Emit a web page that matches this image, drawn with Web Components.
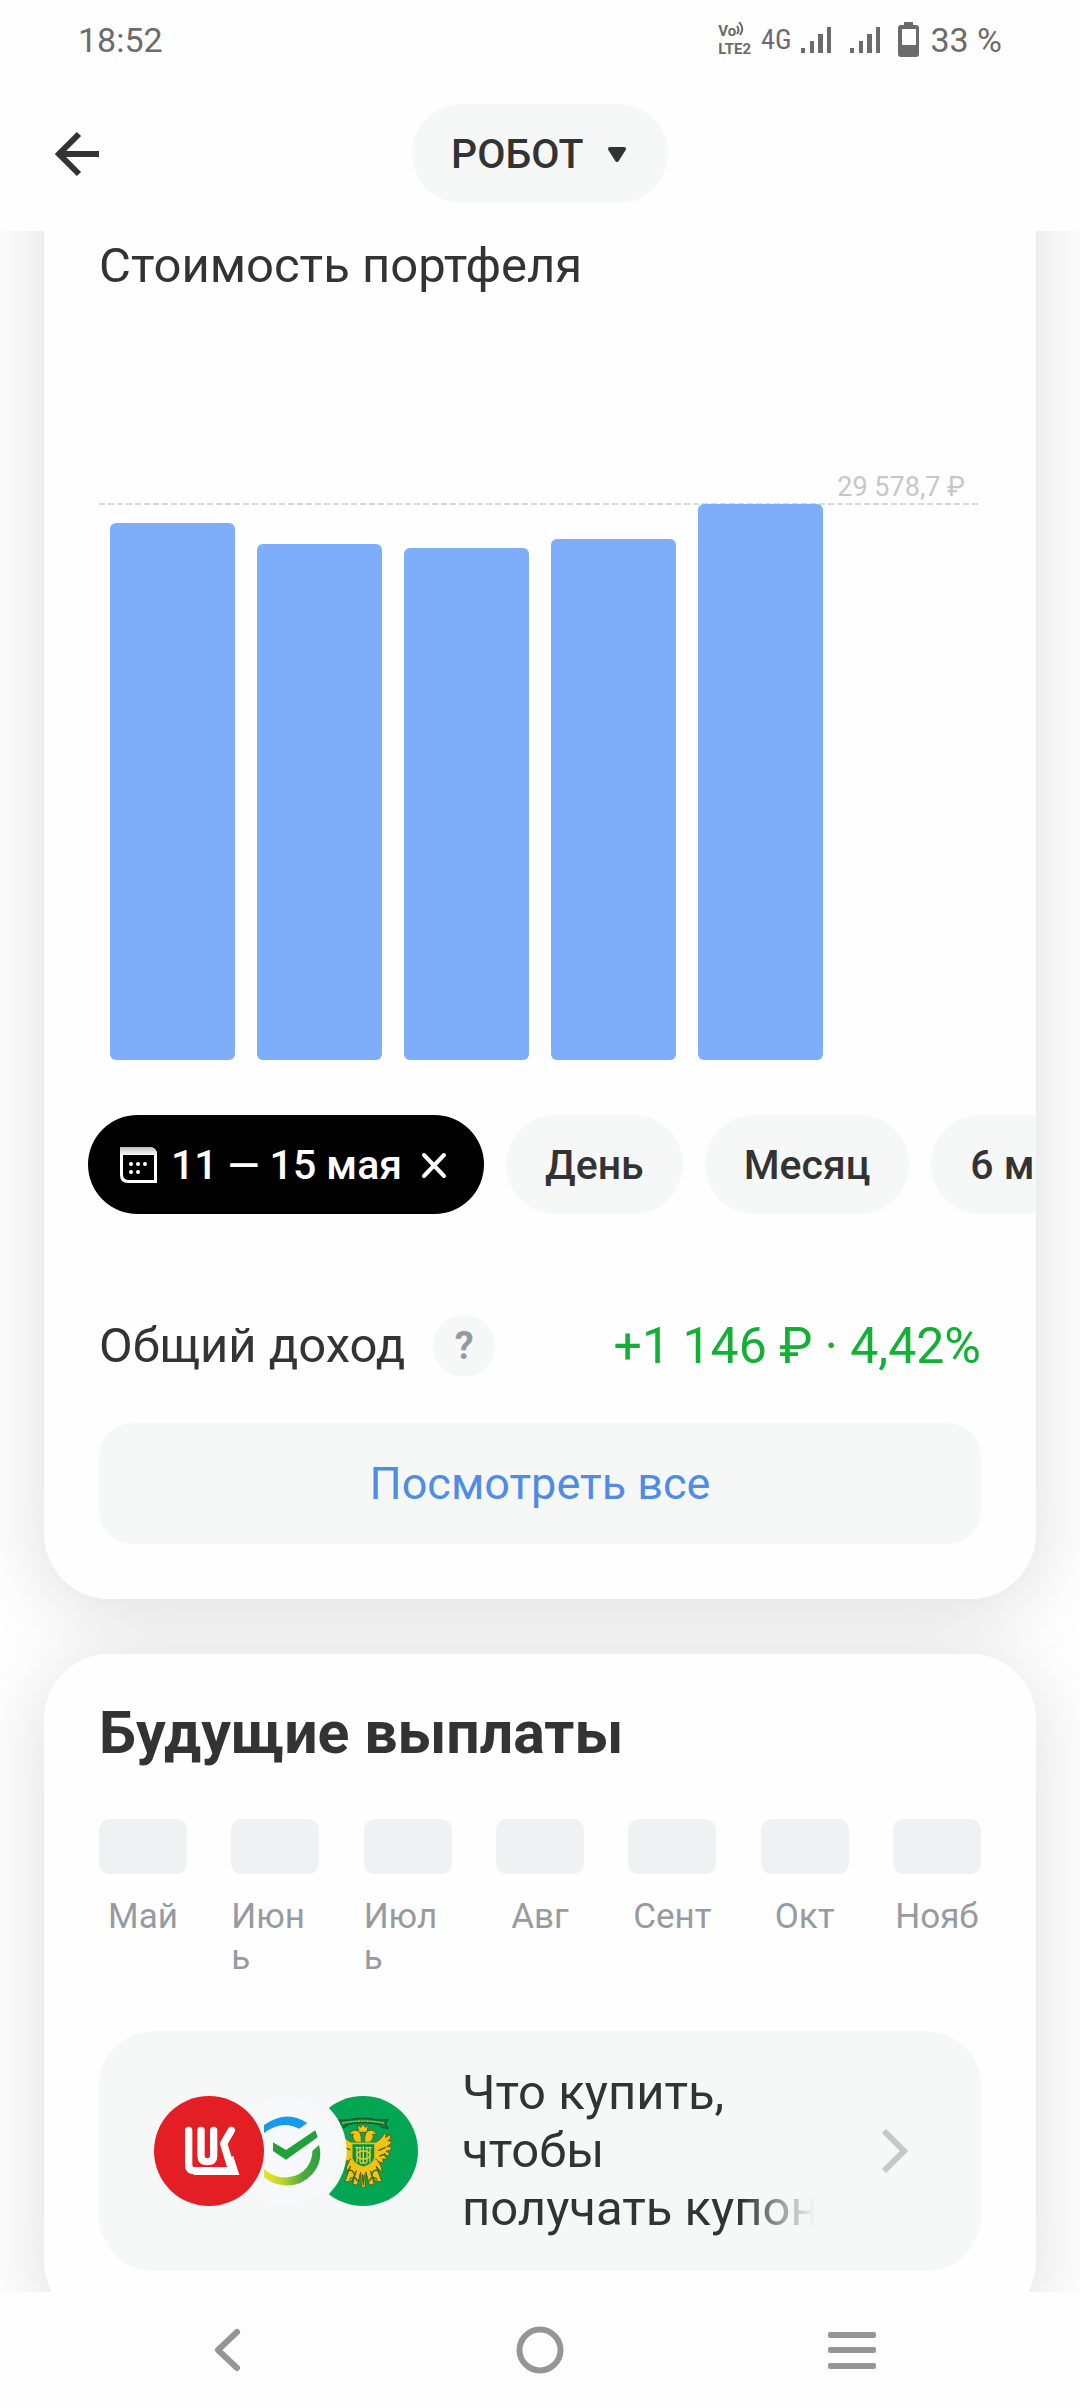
<!DOCTYPE html>
<html lang="ru">
<head>
<meta charset="utf-8">
<meta name="viewport" content="width=device-width, initial-scale=1">
<title>Портфель</title>
<style>
  html, body { margin: 0; height: 100%; }
  body {
    --ink: #333333;
    --muted: #989aa2;
    --soft: #f6f8f7;
    --bar: #7eadf9;
    --link: #4f8ce6;
    --gain: #13b036;
    background: #fefefe;
    color: var(--ink);
    font-family: Roboto, "Noto Sans", sans-serif;
  }
</style>
</head>
<body>
<portfolio-app>
  <status-bar slot="status" time="18:52" charge="33 %"></status-bar>
  <top-bar slot="top" account="РОБОТ"></top-bar>

  <surface-card continued>
    <card-title>Стоимость портфеля</card-title>
    <bar-chart label="29 578,7 ₽" values="537 516 512 521 556" slots="6" max="556"></bar-chart>
    <chip-row>
      <filter-chip active>11 — 15 мая</filter-chip>
      <filter-chip>День</filter-chip>
      <filter-chip>Месяц</filter-chip>
      <filter-chip>6 месяцев</filter-chip>
    </chip-row>
    <income-row amount="+1 146 ₽ · 4,42%">Общий доход</income-row>
    <wide-button>Посмотреть все</wide-button>
  </surface-card>

  <surface-card>
    <card-title strong>Будущие выплаты</card-title>
    <month-strip months="Май,Июнь,Июль,Авг,Сент,Окт,Нояб"></month-strip>
    <promo-banner>
      <issuer-logos slot="logos"></issuer-logos>
      <span>Что купить,</span>
      <span>чтобы</span>
      <span class="last">получать купон</span>
    </promo-banner>
  </surface-card>

  <nav-bar slot="nav"></nav-bar>
</portfolio-app>

<script>
const define = (name, render) => customElements.define(name, class extends HTMLElement {
  constructor() {
    super();
    this.attachShadow({ mode: 'open' });
  }
  connectedCallback() {
    this.shadowRoot.innerHTML = '<style>:host,*{box-sizing:border-box}button,select{font:inherit;color:inherit;border:0;margin:0;padding:0;background:none}svg{display:block;flex:none}</style>' + render(this);
  }
});

define('portfolio-app', () => `
  <style>
    :host { display: flex; flex-direction: column; height: 100vh; }
    main { flex: 1; min-height: 0; overflow: hidden; isolation: isolate;
      display: flex; flex-direction: column; gap: 55px; padding: 0 44px; }
  </style>
  <slot name="status"></slot>
  <slot name="top"></slot>
  <main><slot></slot></main>
  <slot name="nav"></slot>`);

define('status-bar', el => {
  const signal = `<svg width="30" height="28" viewBox="0 0 30 28" fill="currentColor"><path d="M0 22h4v5H0zM9 15h4v12H9zM17 8h5v19h-5zM26 1h4v26h-4z"/></svg>`;
  return `
  <style>
    :host { display: flex; align-items: center; justify-content: space-between; flex: none;
      height: 76px; padding: 3px 78px 0; font-size: 34px; line-height: 40px; color: #6b6b6b; }
    div { display: flex; align-items: center; }
    .volte { display: flex; flex-direction: column; align-items: flex-start; font-weight: 700; }
    .volte span { display: flex; font-size: 15px; line-height: 18px; }
    .net { font-family: "Roboto Condensed", "Liberation Sans Narrow", Roboto, sans-serif; font-size: 28px; margin: 0 10px; }
    .battery { margin: 0 11px 0 18px; }
    .second { margin-left: 19px; }
  </style>
  <time>${el.getAttribute('time')}</time>
  <div>
    <span class="volte"><span>Vo<svg width="9" height="14" viewBox="0 0 9 14" fill="none" stroke="currentColor" stroke-width="2"><path d="M1 4q3 4 0 8M3 0q6 6 1 13"/></svg></span><span>LTE2</span></span>
    <span class="net">4G</span>
    ${signal}<span class="second">${signal}</span>
    <svg class="battery" width="21" height="35" viewBox="0 0 21 35" fill="currentColor"><path fill-rule="evenodd" d="M6 0h9v3h3a3 3 0 0 1 3 3v26a3 3 0 0 1-3 3H3a3 3 0 0 1-3-3V6a3 3 0 0 1 3-3h3zM4 7v16h14V7z"/></svg>
    <span>${el.getAttribute('charge')}</span>
  </div>`;
});

define('top-bar', el => `
  <style>
    :host { display: grid; grid-template-columns: 1fr auto 1fr; align-items: center; flex: none;
      height: 155px; padding: 0 44px; }
    .back { display: flex; width: 66px; height: 66px; align-items: center; justify-content: center; }
    label { display: grid; align-items: center; height: 99px; border-radius: 50px; background: var(--soft); }
    select, svg.caret { grid-area: 1 / 1; }
    select { appearance: none; height: 99px; padding: 0 84px 0 39px; font-size: 41px; font-weight: 500; outline: none; }
    .caret { justify-self: end; margin-right: 41px; pointer-events: none; }
  </style>
  <button class="back" aria-label="Назад"><svg width="46" height="46" viewBox="0 0 46 46" fill="none" stroke="#333" stroke-width="6"><path d="M45 23H5M25 3 5 23l20 20"/></svg></button>
  <label aria-label="Счёт">
    <select><option>${el.getAttribute('account')}</option></select>
    <svg class="caret" width="20" height="18" viewBox="0 0 20 18"><path d="M3 4h14L10 15z" fill="#333" stroke="#333" stroke-width="4" stroke-linejoin="round"/></svg>
  </label>`);

define('surface-card', () => `
  <style>
    :host { display: block; flex: none; position: relative; border-radius: 66px; background: #fefefe;
      padding: 43px 55px 55px; }
    /* the shadow sits on its own layer so it never tints a neighbouring card */
    :host::before { content: ""; position: absolute; inset: 0; z-index: -1; border-radius: 66px;
      box-shadow: 0 12px 80px rgba(0, 0, 0, .13); }
    :host([continued]) { margin-top: -160px; padding-top: 166px; }
  </style>
  <slot></slot>`);

define('card-title', () => `
  <style>
    :host { display: block; }
    h2 { margin: 0; font-size: 49px; line-height: 58px; font-weight: 400; }
    :host([strong]) h2 { font-size: 59px; line-height: 72px; font-weight: 700; }
  </style>
  <h2><slot></slot></h2>`);

define('bar-chart', el => {
  const max = +el.getAttribute('max');
  const bars = el.getAttribute('values').split(' ').map(v => `<i style="height:${v / max * 100}%"></i>`).join('');
  return `
  <style>
    :host { display: block; margin-top: 176px; }
    figure { margin: 0; }
    figcaption { padding-right: 16px; text-align: right; font-size: 27px; line-height: 32px; color: #c6c7c9; }
    .limit { height: 2px; background: repeating-linear-gradient(90deg, #d6d7d9 0 6px, transparent 6px 9px); }
    .plot { display: grid; grid-template-columns: repeat(${el.getAttribute('slots')}, 1fr); gap: 22px; align-items: end;
      height: 556px; margin-top: -1px; padding: 0 11px; }
    i { display: block; border-radius: 6px; background: var(--bar); }
  </style>
  <figure>
    <figcaption>${el.getAttribute('label')}</figcaption>
    <div class="limit"></div>
    <div class="plot">${bars}</div>
  </figure>`;
});

define('chip-row', () => `
  <style>
    :host { display: flex; gap: 22px; margin: 55px -55px 0 -11px; overflow: hidden; }
  </style>
  <slot></slot>`);

define('filter-chip', el => {
  const active = el.hasAttribute('active');
  return `
  <style>
    :host { display: block; flex: none; }
    button { display: flex; align-items: center; gap: 14px; height: 99px; padding: 0 39px; border-radius: 50px;
      background: var(--soft); font-size: 41px; line-height: 50px; font-weight: 500; white-space: nowrap; }
    :host([active]) button { padding: 0 32px; background: #000; color: #fff; }
  </style>
  <button>
    ${active ? `<svg width="37" height="36" viewBox="0 0 37 36"><defs><linearGradient id="g" x2="0" y2="1"><stop stop-color="#bbb"/><stop offset="1" stop-color="#fff"/></linearGradient></defs><path d="M0 0h29q8 0 8 8v28H8q-8 0-8-8zM3 8v19q0 6 6 6h25V8z" fill="#fff" fill-rule="evenodd"/><path d="M0 0h29q8 0 8 8H0z" fill="url(#g)"/><g fill="#fff"><circle cx="11" cy="17" r="2"/><circle cx="18" cy="17" r="2"/><circle cx="25" cy="17" r="2"/><circle cx="11" cy="25" r="2"/><circle cx="18" cy="25" r="2"/></g></svg>` : ''}
    <span><slot></slot></span>
    ${active ? `<svg width="36" height="36" viewBox="0 0 36 36" fill="none" stroke="#fff" stroke-width="4" stroke-linecap="round"><path d="m8 8 20 21M28 8 8 29"/></svg>` : ''}
  </button>`;
});

define('income-row', el => `
  <style>
    :host { display: flex; align-items: center; margin-top: 101px; font-size: 49px; line-height: 58px; }
    button { width: 62px; height: 62px; margin-left: 28px; border-radius: 50%; background: var(--soft);
      color: #9699a3; font-size: 38px; line-height: 62px; font-weight: 700; }
    output { margin-left: auto; color: var(--gain); font-size: 50px; }
  </style>
  <span><slot></slot></span>
  <button aria-label="Подсказка">?</button>
  <output>${el.getAttribute('amount')}</output>`);

define('wide-button', () => `
  <style>
    :host { display: block; margin-top: 46px; }
    button { width: 100%; height: 121px; border-radius: 33px; background: var(--soft); color: var(--link);
      font-size: 45px; line-height: 54px; }
  </style>
  <button><slot></slot></button>`);

define('month-strip', el => `
  <style>
    ul { display: flex; justify-content: space-between; margin: 50px 0 0; padding: 0; list-style: none; }
    :host { display: block; }
    li { display: flex; flex-direction: column; align-items: center; gap: 22px; width: 88px;
      font-size: 35px; line-height: 41px; color: var(--muted); word-break: break-all; }
    i { align-self: stretch; height: 55px; border-radius: 11px; background: #eff1f2; }
  </style>
  <ul>${el.getAttribute('months').split(',').map(m => `<li><i></i><span>${m}</span></li>`).join('')}</ul>`);

define('promo-banner', () => `
  <style>
    :host { display: block; margin-top: 53px; }
    a { display: flex; align-items: center; gap: 44px; padding: 33px 55px; border-radius: 55px;
      background: var(--soft); color: inherit; text-decoration: none; font-size: 49px; line-height: 58px; }
    .copy { flex: 1; min-width: 0; overflow: hidden; white-space: nowrap; }
    ::slotted(span) { display: block; }
    ::slotted(.last) { -webkit-mask-image: linear-gradient(90deg, #000 78%, transparent 98%); mask-image: linear-gradient(90deg, #000 78%, transparent 98%); }
  </style>
  <a href="#">
    <slot name="logos"></slot>
    <div class="copy"><slot></slot></div>
    <svg width="60" height="60" viewBox="0 0 60 60" fill="none" stroke="#c5c9ca" stroke-width="6"><path d="m18 10 20 20-20 20"/></svg>
  </a>`);

define('issuer-logos', () => `
  <style>:host { display: block; flex: none; }</style>
  <svg width="264" height="110" viewBox="102 108 792 330" aria-hidden="true">
    <defs><linearGradient id="s" gradientUnits="userSpaceOnUse" x1="432" x2="602" y1="350" y2="350"><stop stop-color="#e6e42a"/><stop offset=".3" stop-color="#c0d62c"/><stop offset=".7" stop-color="#4aa93a"/><stop offset="1" stop-color="#2ba33c"/></linearGradient></defs>
    <circle cx="729" cy="273" r="165" fill="#05a653"/>
    <g fill="none" stroke-linecap="round" stroke-linejoin="round">
      <path d="M658 180q22 2 44-3 27-5 54 0 24 5 48 1l-8 12 8 15-18-3-10-9q-46-10-92 0l-10 9-12 3z" fill="#078147" stroke="#0b5c2e" stroke-width="4"/>
      <path d="M668 189q60-12 124 0" stroke="#8fb93c" stroke-width="5" stroke-dasharray="3 5"/>
      <g fill="#f2c314" stroke="#53641b" stroke-width="3">
        <path d="m713 194 9 8 7-11 7 11 9-8-4 23h-24z"/>
        <path d="M724 246q3-36-20-36-11 1-17 15l13-3q-6 12 7 24zM734 246q-3-36 20-36 11 1 17 15l-13-3q6 12-7 24z"/>
        <path d="M700 249q-20-6-32-24-6 9 1 17l-16-7q1 12 11 17l-13 1q4 12 16 14l-13 5q6 10 17 8l-11 9q9 7 17 3l-7 12 15-2-2 14 17-10zM758 249q23-4 34-28 8-2 5 11l16-9q2 13-9 20l12-1q-2 13-15 17l15 3q-5 12-18 11l13 9q-7 8-18 4l10 12-16-1 6 14-19-7-16 12z"/>
        <path d="M690 298q-14 22-12 40l14-20-18 48 22-4 13-30-11 40 14 4 10-40 2 44 6 3 6-3 2-44 10 40 14-4-11-40 13 30 22 4-18-48 18 20q2-18-16-40z"/>
      </g>
      <path d="M695 250h70v44q-5 20-35 28-30-8-35-28z" fill="#079346" stroke="#e2c01b" stroke-width="5"/>
      <path d="M711 263v43m9-43v43m-13-43h17M741 263v43m9-43v43m-13-43h17M730 260v49M722 309h16" stroke="#efcb26" stroke-width="4"/>
      <ellipse cx="730" cy="285" rx="20" ry="12" stroke="#efcb26" stroke-width="4"/>
      <path d="M682 333q16-8 22 12m72-12q-16-8-22 12M690 357q14-12 22 6m58-6q-14-12-22 6M672 262l18 7m87 2 20-9m-18 26 17-6M727 345l3 30 3-30" stroke="#3d651d" stroke-width="4"/>
    </g>
    <circle cx="498" cy="273" r="182" fill="#f6f8f7"/>
    <circle cx="498" cy="273" r="165" fill="#f6f8fa"/>
    <path d="M432 195q68-48 130-6l-24 17q-52-28-106 13z" fill="#169be9"/>
    <path d="M597 255q13 48-19 86-34 38-84 35-36-2-62-25v-25q30 29 72 26 37-3 57-30 17-24 16-49z" fill="url(#s)"/>
    <path d="m459 247 39 23 88-59 7 21-95 67-39-26z" fill="#23a038"/>
    <circle cx="267" cy="273" r="165" fill="#e31e24"/>
    <g fill="none" stroke="#fff" stroke-width="22" stroke-linecap="round" stroke-linejoin="round">
      <path d="M206 211v104q0 17 17 17h60"/>
      <path d="M243 211v76q0 18 19 18t19-18v-76"/>
      <path d="m334 211-23 40 19 62"/>
    </g>
    <path d="M220 321h108l-8-25 20-8 18 57H220z" fill="#fff"/>
  </svg>`);

define('nav-bar', () => `
  <style>
    :host { display: block; flex: none; background: #fdfdfd; }
    nav { display: grid; grid-template-columns: repeat(3, 1fr); height: 116px; padding: 0 72px; }
    button { display: flex; align-items: center; justify-content: center; }
  </style>
  <nav>
    <button aria-label="Назад"><svg width="48" height="48" viewBox="0 0 48 48" fill="none" stroke="#959595" stroke-width="6" stroke-linecap="round" stroke-linejoin="round"><path d="M33 6 14 24l19 18"/></svg></button>
    <button aria-label="Домой"><svg width="48" height="48" viewBox="0 0 48 48" fill="none" stroke="#959595" stroke-width="6"><circle cx="24" cy="24" r="20.500"/></svg></button>
    <button aria-label="Приложения"><svg width="48" height="48" viewBox="0 0 48 48" fill="#959595"><rect y="6" width="48" height="6" rx="2"/><rect y="21" width="48" height="6" rx="2"/><rect y="37" width="48" height="6" rx="2"/></svg></button>
  </nav>`);
</script>
</body>
</html>
